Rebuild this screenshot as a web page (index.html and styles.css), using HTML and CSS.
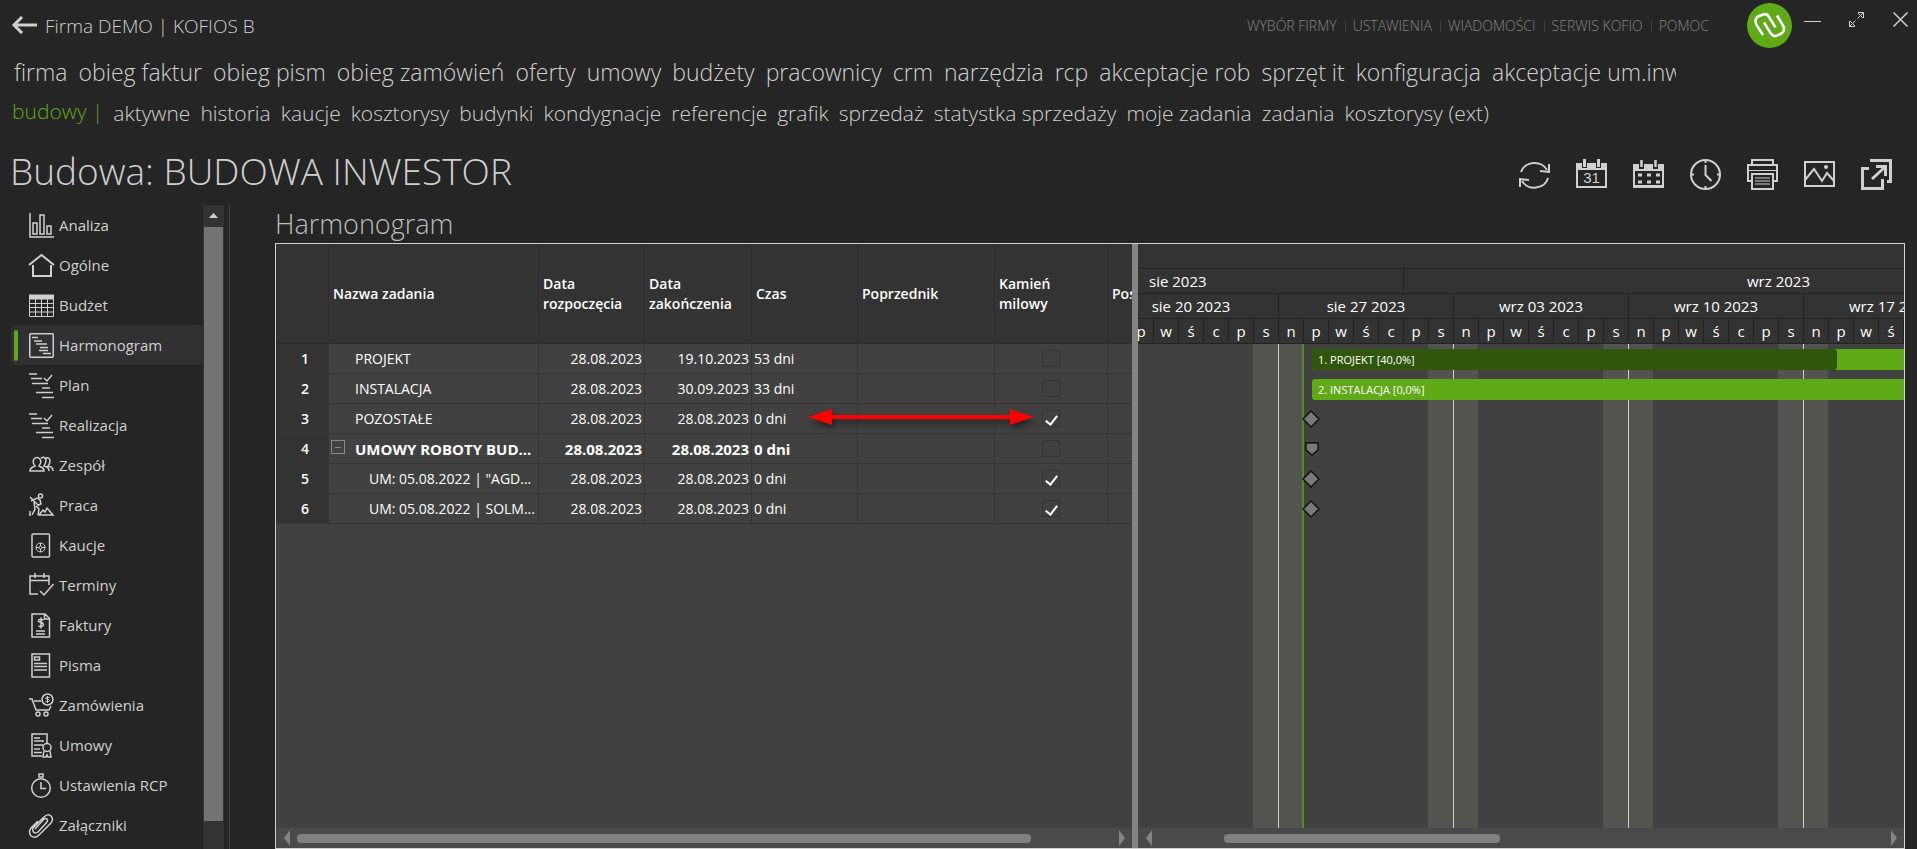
FILE: index.html
```html
<!DOCTYPE html>
<html lang="pl">
<head>
  <meta charset="UTF-8">
  <title>Budowa: BUDOWA INWESTOR</title>
  <link rel="stylesheet" href="styles.css">
</head>
<body>
  <header class="top-bar">
    <button class="back-btn" aria-label="Wstecz">
      <svg width="26" height="18" viewBox="0 0 26 18"><path d="M11 1L3 9l8 8M3 9h23" fill="none" stroke="currentColor" stroke-width="3"/></svg>
    </button>
    <span class="company">Firma DEMO | KOFIOS B</span>
    <nav class="top-links">
      <a href="#">WYBÓR FIRMY</a>
      <a href="#">USTAWIENIA</a>
      <a href="#">WIADOMOŚCI</a>
      <a href="#">SERWIS KOFIO</a>
      <a href="#">POMOC</a>
    </nav>
    <svg class="logo" width="45" height="45" viewBox="0 0 45 45">
      <circle cx="22.5" cy="22.5" r="22.5" fill="#60a917"/>
      <path d="M16 32L9.500 22Q7 16 11 13.500L16 11.500Q20 10 22 14L28.500 24.500M30 12.500L36.500 23.500Q38 28 34.500 30.500L29.500 32.800Q26 34 23.500 30L17 19.500" fill="none" stroke="#fff" stroke-width="2.600"/>
    </svg>
    <div class="window-btns">
      <button aria-label="Minimalizuj"><svg width="17" height="17" viewBox="0 0 17 17"><path d="M0 10.500h17" stroke="currentColor"/></svg></button>
      <button aria-label="Maksymalizuj"><svg width="17" height="17" viewBox="0 0 17 17"><path d="M10 1.500h5.500V7M15.500 1.500L9.500 7.500M10 2l5 5M1.500 10v5.500H7M1.500 15.500l6-6M2 10l5 5" fill="none" stroke="currentColor"/></svg></button>
      <button aria-label="Zamknij"><svg width="17" height="17" viewBox="0 0 17 17"><path d="M1.500 1.500l14 14M15.500 1.500l-14 14" stroke="currentColor" stroke-width="1.500"/></svg></button>
    </div>
  </header>

  <nav class="menu">
    <a href="#">firma</a>
    <a href="#">obieg faktur</a>
    <a href="#">obieg pism</a>
    <a href="#">obieg zamówień</a>
    <a href="#">oferty</a>
    <a href="#">umowy</a>
    <a href="#">budżety</a>
    <a href="#">pracownicy</a>
    <a href="#">crm</a>
    <a href="#">narzędzia</a>
    <a href="#">rcp</a>
    <a href="#">akceptacje rob</a>
    <a href="#">sprzęt it</a>
    <a href="#">konfiguracja</a>
    <a href="#">akceptacje um.inw</a>
  </nav>

  <nav class="submenu">
    <a class="current" href="#">budowy |</a>
    <a href="#">aktywne</a>
    <a href="#">historia</a>
    <a href="#">kaucje</a>
    <a href="#">kosztorysy</a>
    <a href="#">budynki</a>
    <a href="#">kondygnacje</a>
    <a href="#">referencje</a>
    <a href="#">grafik</a>
    <a href="#">sprzedaż</a>
    <a href="#">statystka sprzedaży</a>
    <a href="#">moje zadania</a>
    <a href="#">zadania</a>
    <a href="#">kosztorysy (ext)</a>
  </nav>

  <div class="title-row">
    <h1>Budowa: BUDOWA INWESTOR</h1>
    <div class="toolbar">
      <button aria-label="Odśwież"><svg viewBox="0 0 31 32"><path d="M2 13A14 12.500 0 0 1 28 11M29 19A14 12.500 0 0 1 3 22" fill="none" stroke="currentColor" stroke-width="2"/><path d="M30 5v8l-9-1M1 28v-8l9 1" fill="none" stroke="currentColor" stroke-width="2"/></svg></button>
      <button aria-label="Dzień"><svg viewBox="0 0 31 32"><path d="M0 4h6v5h5V4h9v5h5V4h6v25H0zM2 11v16h27V11z" fill="currentColor" fill-rule="evenodd"/><path d="M8.500 0v8M22.500 0v8" stroke="currentColor" stroke-width="3"/><text x="15.500" y="24" text-anchor="middle" class="icon-text">31</text></svg></button>
      <button aria-label="Miesiąc"><svg viewBox="0 0 31 32"><path d="M0 5h6v5h5V5h9v5h5V5h6v24H0zM2 12v14h27V12z" fill="currentColor" fill-rule="evenodd"/><path d="M8.500 1v7M22.500 1v7" stroke="currentColor" stroke-width="2.500"/><path d="M5 16h22M5 23h22" stroke="currentColor" stroke-width="3" stroke-dasharray="4 5"/></svg></button>
      <button aria-label="Czas"><svg viewBox="0 0 31 32" fill="none" stroke="currentColor" stroke-width="2"><circle cx="15.500" cy="15.500" r="14.500"/><path d="M15.500 6v10l6 6M15.500 1v3M15.500 27v3M1 15.500h3M27 15.500h3"/></svg></button>
      <button aria-label="Drukuj"><svg viewBox="0 0 31 32" fill="none" stroke="currentColor" stroke-width="2"><path d="M5 5V1h21v4M5 22H1V6h29v16h-4M5 15h21v15H5z"/><path d="M2 11.500h27M8 19h15M8 22h15M8 25h15" stroke-width="1"/></svg></button>
      <button aria-label="Obraz"><svg viewBox="0 0 31 32" fill="none" stroke="currentColor" stroke-width="2"><path d="M1 3h29v24H1zM1 21L10 10l8 12 5-8 7 8"/><circle cx="22" cy="8" r="2" fill="currentColor" stroke="none"/></svg></button>
      <button aria-label="Otwórz w nowym oknie"><svg viewBox="0 0 31 32" fill="none" stroke="currentColor" stroke-width="3"><path d="M8 9.500H1.500v20h20V20M9 1.500h20.500v21H26M11 20L24 8"/><path d="M15 7.500h9.500V17"/></svg></button>
    </div>
  </div>

  <div class="content">
    <aside class="sidebar">
      <nav class="side-nav">
        <a href="#"><svg viewBox="0 0 25 25"><path d="M1 0v24h24M4 10h4v11H4zM11 2h4v19h-4zM18 13h4v8h-4z"/></svg>Analiza</a>
        <a href="#"><svg viewBox="0 0 25 25"><path d="M0 12L12.500 2 25 12M4 12v11h18V12" stroke-width="2"/></svg>Ogólne</a>
        <a href="#"><svg viewBox="0 0 25 25"><path d="M0 4h25" stroke-width="5"/><path d="M.500 3v20.500h24V3M0 10.500h25M0 14.500h25M0 19h25M6.500 5v18M12.500 5v18M18.500 5v18" stroke-width="1"/></svg>Budżet</a>
        <a class="active" href="#"><svg viewBox="0 0 25 25"><rect x=".750" y=".750" width="23.500" height="23.500" rx="1"/><path d="M3 4.500h6M5 8h8M7 11h11M11 14.500h8M10 17.500h9M14 20.500h8"/></svg>Harmonogram</a>
        <a href="#"><svg viewBox="0 0 25 25"><path d="M0 1h8M2 5.500h11M3 10.500h16M13 15h8M7 19.500h17M13 24.500h12M15 5l3 3 5-6"/></svg>Plan</a>
        <a href="#"><svg viewBox="0 0 25 25"><path d="M0 1h8M2 5.500h11M3 10.500h16M13 15h8M7 19.500h17M13 24.500h12M15 5l3 3 5-6"/></svg>Realizacja</a>
        <a href="#"><svg viewBox="0 0 25 25"><path d="M1 18q0-3 3-4l2-1q-3-4-1-7 3-3 6 0 2 3-1 7l2 1q3 1 3 4zM12 5q4-2 5 2 0 3-2 6l3 1q2 1 2 4M17 5q4-1 4 3 0 3-2 5l3 1q2 1 2 4"/></svg>Zespół</a>
        <a href="#"><svg viewBox="0 0 25 25"><circle cx="11.500" cy="3" r="2"/><path d="M1 4l9 9M2 8l6-3 3 2 1 4-3 1M5 9l1 7-3 6M7 13l3 3-1 6M1 18v5M10 22l4-5 2 2 2-4 6 7z"/></svg>Praca</a>
        <a href="#"><svg viewBox="0 0 25 25"><rect x="3" y="1" width="17.500" height="23" rx="1"/><circle cx="11.500" cy="14.500" r="4.500" stroke-width="1"/><circle cx="11.500" cy="14.500" r="1.500" stroke-width="1"/><path d="M11.500 10v3M11.500 16v3M7 14.500h3M13 14.500h3" stroke-width="1"/></svg>Kaucje</a>
        <a href="#"><svg viewBox="0 0 25 25"><path d="M9 21H1V3h19v9M1 7.500h19M6 0v5M15 0v5M11 18l4 4 9.500-11"/></svg>Terminy</a>
        <a href="#"><svg viewBox="0 0 25 25"><path d="M3 1h13l4.500 4.500V24H3zM15.500 1v5h5M7 18h9M7 21h9M14.500 7Q9 5 9.500 8.500q5 1 5 3.500-1 2.500-5 1M12 4.500v11"/></svg>Faktury</a>
        <a href="#"><svg viewBox="0 0 25 25"><path d="M3 1h17.500v23H3zM5.500 4h5v3h-5zM5 10.500h13M5 13.500h13M5 17h13"/></svg>Pisma</a>
        <a href="#"><svg viewBox="0 0 25 25"><circle cx="18.500" cy="6.500" r="5.500"/><circle cx="9" cy="21" r="2"/><circle cx="17" cy="21" r="2"/><path d="M0 6h3l4 11h13l2-4M5 8h7"/><path d="M20.500 4.500q-4-1-4 1 4 1 4 2-1 2-4 1M18.500 3v7" stroke-width="1"/></svg>Zamówienia</a>
        <a href="#"><svg viewBox="0 0 25 25"><path d="M13 23H3V1h15v9M5 5h6M5 8h10M5 12h9M5 16h6M5 19.500h8"/><circle cx="18" cy="14.500" r="4"/><path d="M15 18l-1 6h3l1-2 1 2h3l-1-6"/></svg>Umowy</a>
        <a href="#"><svg viewBox="0 0 25 25"><circle cx="12" cy="15" r="9.300"/><path d="M12 9v6.500h5M10 1h4v3h-4z"/></svg>Ustawienia RCP</a>
        <a href="#"><svg viewBox="0 0 25 25"><path d="M6 16l9-10q2-1 3 0 1 2 0 3L9 19q-3 2-4.500 0Q3 17 4 15L15 4q4-4 7-1 3 3 0 7L10 22q-4 4-8 1-3-4 0-8l7-7"/></svg>Załączniki</a>
      </nav>
      <div class="side-scroll">
        <svg width="9" height="5" viewBox="0 0 9 5"><path d="M0 5l4.500-5L9 5z" fill="#d0d0d0"/></svg>
        <div class="side-thumb"></div>
      </div>
    </aside>

    <main class="main">
      <h2>Harmonogram</h2>
      <div class="gantt">
        <section class="tasks">
          <table>
            <colgroup>
              <col style="width:53px"><col style="width:210px"><col style="width:106px"><col style="width:107px"><col style="width:106px"><col style="width:137px"><col style="width:113px"><col style="width:80px">
            </colgroup>
            <thead>
              <tr><th></th><th>Nazwa zadania</th><th>Data rozpoczęcia</th><th>Data zakończenia</th><th>Czas</th><th>Poprzednik</th><th>Kamień milowy</th><th>Postęp</th></tr>
            </thead>
            <tbody>
              <tr><th>1</th><td class="name">PROJEKT</td><td class="date">28.08.2023</td><td class="date">19.10.2023</td><td>53 dni</td><td></td><td class="check"><input type="checkbox" aria-label="Kamień milowy 1"></td><td></td></tr>
              <tr><th>2</th><td class="name">INSTALACJA</td><td class="date">28.08.2023</td><td class="date">30.09.2023</td><td>33 dni</td><td></td><td class="check"><input type="checkbox" aria-label="Kamień milowy 2"></td><td></td></tr>
              <tr><th>3</th><td class="name">POZOSTAŁE</td><td class="date">28.08.2023</td><td class="date">28.08.2023</td><td>0 dni</td><td></td><td class="check"><input type="checkbox" aria-label="Kamień milowy 3" checked></td><td></td></tr>
              <tr class="group"><th>4</th><td class="name"><button class="collapse" aria-label="Zwiń"></button>UMOWY ROBOTY BUD...</td><td class="date">28.08.2023</td><td class="date">28.08.2023</td><td>0 dni</td><td></td><td class="check"><input type="checkbox" aria-label="Kamień milowy 4"></td><td></td></tr>
              <tr><th>5</th><td class="name sub">UM: 05.08.2022 | "AGD...</td><td class="date">28.08.2023</td><td class="date">28.08.2023</td><td>0 dni</td><td></td><td class="check"><input type="checkbox" aria-label="Kamień milowy 5" checked></td><td></td></tr>
              <tr><th>6</th><td class="name sub">UM: 05.08.2022 | SOLM...</td><td class="date">28.08.2023</td><td class="date">28.08.2023</td><td>0 dni</td><td></td><td class="check"><input type="checkbox" aria-label="Kamień milowy 6" checked></td><td></td></tr>
            </tbody>
          </table>
          <svg class="arrow" width="226" height="16" viewBox="0 0 226 16"><path d="M0 8L24 0v6h178V0l24 8-24 8v-6H24v6z" fill="#f00"/></svg>
          <div class="h-scroll">
            <svg width="6" height="16" viewBox="0 0 6 16"><path d="M6 0v16L0 8z"/></svg>
            <div class="h-track"><div class="h-thumb" style="width:90%"></div></div>
            <svg width="6" height="16" viewBox="0 0 6 16"><path d="M0 0v16l6-8z"/></svg>
          </div>
        </section>

        <section class="timeline">
          <div class="scale spacer"></div>
          <div class="scale months"><span>sie 2023</span><span>wrz 2023</span></div>
          <div class="scale weeks"><span>sie 20 2023</span><span>sie 27 2023</span><span>wrz 03 2023</span><span>wrz 10 2023</span><span>wrz 17 2023</span></div>
          <div class="scale days"><span>p</span><span>w</span><span>ś</span><span>c</span><span>p</span><span>s</span><span>n</span><span>p</span><span>w</span><span>ś</span><span>c</span><span>p</span><span>s</span><span>n</span><span>p</span><span>w</span><span>ś</span><span>c</span><span>p</span><span>s</span><span>n</span><span>p</span><span>w</span><span>ś</span><span>c</span><span>p</span><span>s</span><span>n</span><span>p</span><span>w</span><span>ś</span></div>
          <div class="chart">
            <div class="row"><div class="bar" style="width:1313px"><div class="progress" style="width:40%"></div><span>1. PROJEKT [40,0%]</span></div></div>
            <div class="row"><div class="bar" style="width:813px"><span>2. INSTALACJA [0,0%]</span></div></div>
            <div class="row"><svg class="mark" width="18" height="18" viewBox="0 0 18 18"><path d="M9 1l8 8-8 8-8-8z"/></svg></div>
            <div class="row"><svg class="mark" width="18" height="18" viewBox="0 0 18 18"><path d="M4 3h12v7l-6 5-6-5z"/></svg></div>
            <div class="row"><svg class="mark" width="18" height="18" viewBox="0 0 18 18"><path d="M9 1l8 8-8 8-8-8z"/></svg></div>
            <div class="row"><svg class="mark" width="18" height="18" viewBox="0 0 18 18"><path d="M9 1l8 8-8 8-8-8z"/></svg></div>
          </div>
          <div class="h-scroll">
            <svg width="6" height="16" viewBox="0 0 6 16"><path d="M6 0v16L0 8z"/></svg>
            <div class="h-track"><div class="h-thumb" style="width:38%;margin-left:9%"></div></div>
            <svg width="6" height="16" viewBox="0 0 6 16"><path d="M0 0v16l6-8z"/></svg>
          </div>
        </section>
      </div>
    </main>
  </div>
</body>
</html>
```
FILE: styles.css
```css
* {
  box-sizing: border-box;
}
body {
  margin: 0;
  height: 100vh;
  background: #252525;
  color: #d0d0d0;
  font-family: 'Open Sans', 'Noto Sans', sans-serif;
  font-size: 14px;
  overflow: hidden;
  display: flex;
  flex-direction: column;
}
a {
  color: inherit;
  text-decoration: none;
}
button {
  padding: 0;
  border: none;
  background: none;
  color: inherit;
  cursor: pointer;
}
svg {
  display: block;
  flex-shrink: 0;
}

/* header */
.top-bar {
  height: 50px;
  padding: 0 8px 0 11px;
  display: flex;
  align-items: center;
  flex-shrink: 0;
}
.company {
  margin-left: 8px;
  padding-top: 2px;
  font-size: 19px;
  font-weight: 300;
  flex: 1;
}
.top-links {
  display: flex;
  font-weight: 300;
  font-size: 14px;
  line-height: 12px;
  color: #858585;
  padding-top: 2px;
  margin-right: 38px;
}
.top-links a + a {
  margin-left: 8px;
  padding-left: 7px;
  border-left: 1px solid #3d3d42;
}
.window-btns {
  display: flex;
  gap: 27px;
  margin-left: 12px;
  padding-bottom: 11px;
}

/* menus */
.menu {
  height: 44px;
  margin: 0 241px 0 14px;
  overflow: hidden;
  display: flex;
  align-items: center;
  gap: 11px;
  font-size: 23px;
  font-weight: 300;
  white-space: nowrap;
  flex-shrink: 0;
}
.submenu {
  height: 38px;
  margin-left: 12px;
  display: flex;
  align-items: center;
  gap: 10px;
  font-size: 21px;
  font-weight: 300;
  white-space: nowrap;
  flex-shrink: 0;
}
.submenu .current {
  color: #60a917;
  padding-bottom: 4px;
}

.title-row {
  height: 73px;
  padding: 5px 25px 0 10px;
  display: flex;
  justify-content: space-between;
  align-items: center;
  flex-shrink: 0;
}
h1 {
  margin: 0;
  font-size: 37px;
  font-weight: 300;
  line-height: 48px;
}
.toolbar {
  display: flex;
  gap: 26px;
  padding-top: 7px;
}
.toolbar svg {
  width: 31px;
  height: 32px;
}
.icon-text {
  font: 15px 'Liberation Sans', sans-serif;
  fill: currentColor;
}

.content {
  flex: 1;
  min-height: 0;
  display: flex;
}

/* sidebar */
.sidebar {
  width: 230px;
  flex-shrink: 0;
  display: flex;
  border-right: 1px solid #404040;
}
.side-nav {
  flex: 1;
  padding-left: 11px;
}
.side-nav a {
  height: 40px;
  display: flex;
  align-items: center;
  gap: 5px;
  font-size: 15px;
  border-radius: 5px;
}
.side-nav a::before {
  content: '';
  width: 4px;
  height: 31px;
  margin: 0 6px 0 3px;
  border-radius: 2px;
}
.side-nav svg {
  width: 25px;
  height: 25px;
  overflow: visible;
  fill: none;
  stroke: currentColor;
  stroke-width: 1.5;
}
.side-nav .active {
  background: #313134;
}
.side-nav .active::before {
  background: #60a917;
}
.side-scroll {
  width: 21px;
  margin-right: 5px;
  background: #333;
  display: flex;
  flex-direction: column;
  align-items: center;
  padding: 8px 1px 28px;
}
.side-thumb {
  flex: 1;
  width: 100%;
  margin-top: 9px;
  background: #737373;
}

/* gantt */
.main {
  flex: 1;
  min-width: 0;
  padding: 0 12px 0 45px;
  display: flex;
  flex-direction: column;
}
h2 {
  margin: 0;
  font-size: 27px;
  line-height: 38px;
  font-weight: 300;
  color: #bebebe;
}
.gantt {
  flex: 1;
  min-height: 0;
  display: flex;
  border: 1px solid #d0d0d0;
  background: #414141;
  color: #fff;
}
.tasks {
  position: relative;
  width: 862px;
  flex-shrink: 0;
  overflow: hidden;
  border-right: 6px solid #848484;
  display: flex;
  flex-direction: column;
}
table {
  width: 912px;
  table-layout: fixed;
  border-collapse: separate;
  border-spacing: 0;
}
th {
  background: #333;
  font-weight: 600;
}
th,
td {
  height: 30px;
  padding: 0 2px;
  border-right: 1px solid #353535;
  border-bottom: 1px solid #353535;
  white-space: nowrap;
}
tbody th {
  padding-left: 8px;
}
thead th {
  height: 100px;
  padding: 0 10px 0 4px;
  border-color: #2d2d2d;
  line-height: 20px;
  text-align: left;
  white-space: normal;
}
.name {
  position: relative;
  padding-left: 26px;
}
.sub {
  padding-left: 40px;
}
.date {
  text-align: right;
}
.check {
  text-align: center;
}
.group td {
  font-size: 15px;
  font-weight: 700;
}
.collapse {
  position: absolute;
  left: 2px;
  top: 6px;
  width: 14px;
  height: 14px;
  border: 1px solid #8a8a8a;
}
.collapse::before {
  content: '';
  display: block;
  width: 6px;
  height: 1px;
  margin: 0 auto;
  background: #8a8a8a;
}
input[type="checkbox"] {
  appearance: none;
  display: block;
  width: 18px;
  height: 17px;
  margin: 0 auto;
  border: 1px solid #353535;
}
input[type="checkbox"]:checked::before {
  content: '';
  display: block;
  width: 5px;
  height: 10px;
  margin: 2px auto;
  border: solid #fff;
  border-width: 0 2px 2px 0;
  transform: rotate(38deg);
}
.arrow {
  position: absolute;
  left: 532px;
  top: 165px;
  filter: drop-shadow(2px 4px 3px rgba(0, 0, 0, 0.5));
}
.h-scroll {
  height: 20px;
  margin-top: auto;
  padding: 0 7px 0 8px;
  background: #4a4a4a;
  display: flex;
  align-items: center;
  gap: 7px;
  flex-shrink: 0;
}
.h-scroll svg {
  fill: #848484;
}
.h-track {
  flex: 1;
}
.h-thumb {
  height: 9px;
  border-radius: 4px;
  background: #808080;
}

.timeline {
  flex: 1;
  min-width: 0;
  overflow: hidden;
  display: flex;
  flex-direction: column;
}
.scale {
  display: flex;
  height: 25px;
  background: #333;
  border-bottom: 1px solid #222;
  font-size: 15px;
  line-height: 25px;
  text-align: center;
  flex-shrink: 0;
}
.scale span {
  flex-shrink: 0;
  border-right: 1px solid #222;
}
.months span {
  width: 266px;
  padding-left: 11px;
  text-align: left;
}
.months span + span {
  width: 750px;
  padding: 0;
  text-align: center;
}
.weeks span {
  width: 175px;
}
.weeks span:first-child {
  margin-left: -34px;
}
.days span {
  width: 25px;
}
.days span:first-child {
  margin-left: -9px;
}
/* weekends and week starts */
.chart {
  flex: 1;
  background: repeating-linear-gradient(90deg, #414141 0 115px, #535350 115px 140px, #d0d0d0 140px 141px, #535350 141px 165px, #414141 165px 175px);
  position: relative;
}
/* today */
.chart::before {
  content: '';
  position: absolute;
  left: 164px;
  top: 0;
  bottom: 0;
  width: 2px;
  background: #55892a;
}
.row {
  position: relative;
  height: 30px;
  display: flex;
  align-items: center;
  overflow: hidden;
}
.bar {
  position: relative;
  flex-shrink: 0;
  height: 21px;
  margin-left: 174px;
  border-radius: 3px;
  background: #60a917;
  font-size: 11px;
  line-height: 22px;
}
.bar span {
  position: relative;
  padding-left: 6px;
}
.progress {
  position: absolute;
  top: 0;
  bottom: 0;
  left: 0;
  border-radius: 3px;
  background: #30560c;
}
.mark {
  margin-left: 164px;
  fill: #7a7a7a;
  stroke: #111;
  stroke-width: 1.5;
}
```
